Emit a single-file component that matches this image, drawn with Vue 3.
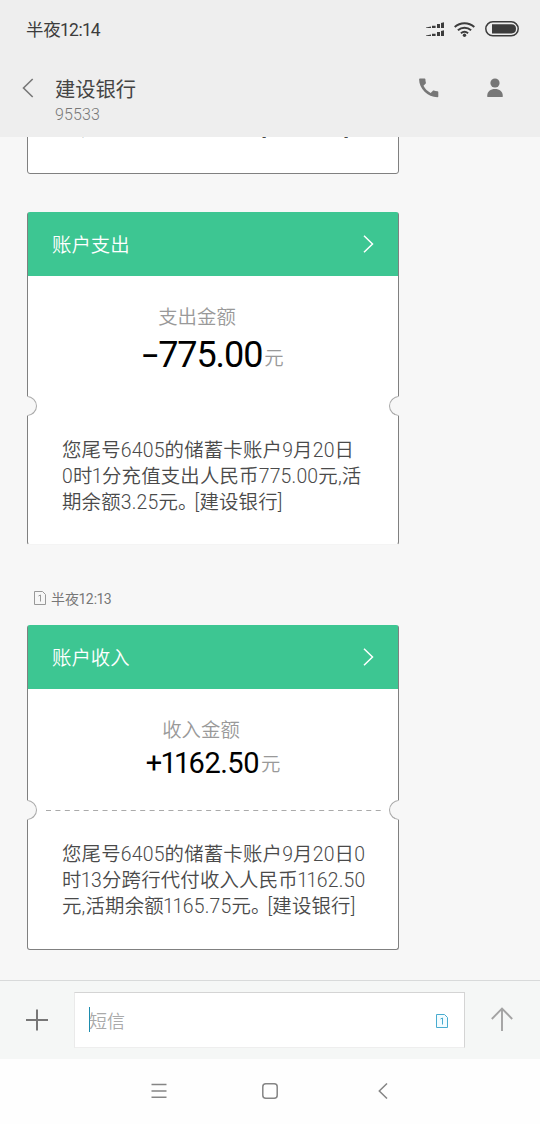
<template>
  <div class="screen">
    <div class="status">
      <span class="clock"><span v-for="(part, i) in split('半夜12:14')" :key="i" :class="partClass(part)">{{ part }}</span></span>
      <svg class="signal" width="19" height="15" viewBox="0 0 19 15" fill="#3c3c3c">
        <path d="M0 5.600 5 4.600V6H0zM6 3.800h3.600V6H6zM11 1.900h3v4.100h-3zM15 .900l3-.600V6h-3z" />
        <path d="M0 13.600 5 12.600V14H0zM6 11.800h3.600V14H6zM11 9.900h3v4.100h-3zM15 8.900l3-.600V14h-3z" />
      </svg>
      <svg class="wifi" width="21" height="15" viewBox="0 0 21 15" fill="none" stroke="#3c3c3c" stroke-width="2">
        <path d="M.7 5a14.500 14.500 0 0 1 19.600 0M3.900 8.200a10 10 0 0 1 13.200 0M6.900 11.300a5.600 5.600 0 0 1 7.200 0" />
        <circle cx="10.500" cy="13.200" r="1.700" fill="#3c3c3c" stroke="none" />
      </svg>
      <svg class="battery" width="34" height="16" viewBox="0 0 34 16">
        <rect x=".8" y=".8" width="32.400" height="14" rx="7" fill="none" stroke="#3c3c3c" stroke-width="1.500" />
        <path d="M7 3.200h19.500q4.500 0 4.500 4.600t-4.500 4.600H7z" fill="#3c3c3c" />
      </svg>
    </div>

    <header class="header">
      <svg class="back" width="12" height="20" viewBox="0 0 12 20" fill="none" stroke="#777" stroke-width="1.600">
        <path d="M10.700 1 1.500 10l9.200 9" />
      </svg>
      <div class="contact">
        <h1>建设银行</h1>
        <p>95533</p>
      </div>
      <svg class="phone" width="20" height="20" viewBox="0 0 20 20" fill="#777">
        <path d="M.9.5h4.700c.5 0 .8.3.8.8 0 1.200.2 2.300.5 3.400.1.3 0 .7-.2.9L4.500 7.800c1.600 3.100 4.100 5.600 7.200 7.200l2.200-2.200c.2-.2.6-.3.9-.2 1.100.3 2.200.5 3.700.6.5 0 .8.3.8.8v4.400c0 .5-.3.8-.8.8C8.700 19.200.1 10.700.1 1.300.1.800.4.500.9.500z" />
      </svg>
      <svg class="person" width="16" height="20" viewBox="0 0 16 20" fill="#777">
        <circle cx="8" cy="5" r="4.600" />
        <path d="M.3 19v-1.700C.3 13.600 3.500 11 8 11s7.700 2.600 7.700 6.300V19z" />
      </svg>
    </header>

    <main class="chat">
      <div class="card previous">
        <p><span v-for="(part, i) in split('元,活期余额778.25元。[建设银行]')" :key="i" :class="partClass(part)">{{ part }}</span></p>
      </div>

      <template v-for="msg in messages" :key="msg.title">
        <div v-if="msg.time" class="time">
          <svg width="12" height="14" viewBox="0 0 12 14" fill="none" stroke="#999">
            <path d="M.5.5h8l3 3v10H.5z" />
            <path d="M4.500 5 6.500 4v6.500" />
          </svg>
          <p><span v-for="(part, i) in split(msg.time)" :key="i" :class="partClass(part)">{{ part }}</span></p>
        </div>
        <section class="card" :class="msg.type">
          <div class="card-head">
            <span>{{ msg.title }}</span>
            <svg width="11" height="18" viewBox="0 0 11 18" fill="none" stroke="#fff" stroke-width="1.500">
              <path d="m1 .8 8.500 8.200L1 17.200" />
            </svg>
          </div>
          <div class="amount">
            <h2>{{ msg.label }}</h2>
            <p>
              <b><span v-for="(part, i) in split(msg.amount)" :key="i" :class="partClass(part)">{{ part }}</span></b>
              <span class="unit">元</span>
            </p>
          </div>
          <div class="tear">
            <i class="notch"></i>
            <svg v-if="msg.type === 'income'" width="335" height="1" viewBox="0 0 335 1">
              <path d="M0 .5h335" stroke="#aaa" stroke-dasharray="5 4.420" />
            </svg>
            <i class="notch right"></i>
          </div>
          <div class="detail">
            <p v-for="line in msg.lines" :key="line"><span v-for="(part, i) in split(line)" :key="i" :class="partClass(part)">{{ part }}</span></p>
          </div>
        </section>
      </template>
    </main>

    <footer class="composer">
      <svg class="plus" width="22" height="22" viewBox="0 0 22 22" stroke="#777" stroke-width="2">
        <path d="M0 11h22M11 .5v21" />
      </svg>
      <div class="field">
        <i class="caret"></i>
        <span>短信</span>
        <svg width="12" height="14" viewBox="0 0 12 14" fill="#f3fcff" stroke="#49acd0">
          <path d="M.5.5h8l3 3v10H.5z" />
          <path d="M4.500 5 6.500 4v6.500" fill="none" />
        </svg>
      </div>
      <svg class="send" width="22" height="24" viewBox="0 0 22 24" fill="none" stroke="#a3a3a3" stroke-width="1.900">
        <path d="M11 24V1.500M.8 12 11 1.500 21.200 12" />
      </svg>
    </footer>

    <nav class="nav">
      <svg width="16" height="16" viewBox="0 0 16 16" stroke="#858585" stroke-width="1.500">
        <path d="M.5 1.500h15M.5 8h15M.5 14.200h15" />
      </svg>
      <svg width="16" height="16" viewBox="0 0 16 16" fill="none" stroke="#858585" stroke-width="1.500">
        <rect x=".8" y=".8" width="14.400" height="14.400" rx="3" />
      </svg>
      <svg width="10" height="16" viewBox="0 0 10 16" fill="none" stroke="#858585" stroke-width="1.500">
        <path d="M9 .5 1.300 8 9 15.500" />
      </svg>
    </nav>
  </div>
</template>

<script setup>
import { ref } from 'vue';

const messages = ref([
  {
    type: 'expense',
    title: '账户支出',
    label: '支出金额',
    amount: '-775.00',
    lines: [
      '您尾号6405的储蓄卡账户9月20日',
      '0时1分充值支出人民币775.00元,活',
      '期余额3.25元。[建设银行]'
    ]
  },
  {
    type: 'income',
    time: '半夜12:13',
    title: '账户收入',
    label: '收入金额',
    amount: '+1162.50',
    lines: [
      '您尾号6405的储蓄卡账户9月20日0',
      '时13分跨行代付收入人民币1162.50',
      '元,活期余额1165.75元。[建设银行]'
    ]
  }
]);

// the digit 1, the full stop and the minus get their own spacing
const split = (text) => text.split(/(1|。|-)/).filter(Boolean);

const partClass = (part) => ({
  one: part === '1',
  stop: part === '。',
  minus: part === '-'
});
</script>

<style>
body {
  margin: 0;
  background: #fff;
}
</style>

<style scoped>
.screen {
  display: flex;
  flex-direction: column;
  width: 540px;
  height: 1124px;
  overflow: hidden;
  background: #f7f7f7;
  font-family: Roboto, "Noto Sans CJK SC", sans-serif;
}

h1,
h2,
p {
  margin: 0;
  font-weight: inherit;
  white-space: nowrap;
}

svg {
  display: block;
  flex: none;
}

.one {
  margin: 0 -0.04em;
}

.stop {
  letter-spacing: -0.15em;
}

.minus {
  display: inline-block;
  margin: 0 4px 0 3px;
  transform: scaleX(1.6);
}

.status {
  display: flex;
  align-items: center;
  flex: none;
  box-sizing: border-box;
  height: 60px;
  padding: 0 21px 2px 26px;
  background: #eee;
  color: #3c3c3c;
}

.clock {
  flex: 1;
  margin-top: -2px;
  font-size: 17.5px;
  letter-spacing: -0.2px;
}

.wifi {
  margin: 0 10px 0 9px;
}

.header {
  display: flex;
  flex: none;
  height: 77px;
  background: #eee;
}

.back {
  margin: 18px 0 0 22px;
}

.contact {
  flex: 1;
  margin: 16px 0 0 21px;
}

.contact h1 {
  color: #444;
  font-size: 20.3px;
  line-height: 28px;
}

.contact p {
  color: #777;
  font-size: 16px;
  font-weight: 300;
  letter-spacing: 0.1px;
  line-height: 22px;
}

.phone {
  margin: 18px 48px 0 0;
}

.person {
  margin: 18px 37px 0 0;
}

.chat {
  flex: 1;
  min-height: 0;
  overflow: hidden;
  padding-left: 27px;
}

.card {
  box-sizing: border-box;
  width: 372px;
  border: 1px solid #808080;
  border-radius: 3px;
  background: #fff;
}

.previous {
  height: 59px;
  margin: -22px 0 38px;
  padding: 0 0 0 34px;
  color: #4a4a4a;
  font-size: 19.4px;
  font-weight: 350;
  letter-spacing: 0.3px;
  line-height: 26px;
}

.expense {
  height: 333px;
  border-top-color: #3dc692;
  border-bottom-color: #f4f4f4;
}

.income {
  height: 325px;
  border-top-color: #3dc692;
}

.card-head {
  display: flex;
  align-items: center;
  justify-content: space-between;
  box-sizing: border-box;
  height: 63px;
  padding: 0 24px 2px 24px;
  background: #3dc692;
  color: #fff;
  font-size: 19.4px;
  font-weight: 350;
}

.amount {
  display: flex;
  flex-direction: column;
  align-items: center;
  box-sizing: border-box;
  height: 120px;
  padding-top: 28px;
}

.amount h2 {
  margin-right: 32px;
  color: #999;
  font-size: 19.4px;
  font-weight: 350;
  line-height: 28px;
}

.amount p {
  display: flex;
  align-items: baseline;
  height: 46px;
  line-height: 46px;
}

.amount b {
  color: #000;
  font-size: 36px;
  font-weight: 400;
  letter-spacing: -1.1px;
}

.amount .unit {
  margin-left: 2px;
  padding-bottom: 2px;
  color: #999;
  font-size: 19.4px;
  font-weight: 350;
  transform: translateY(-2px);
}

.income .amount {
  height: 111px;
}

.income .amount h2 {
  margin-right: 24px;
}

.income .amount b {
  font-size: 29px;
  letter-spacing: -0.5px;
}

.income .amount p {
  height: 36px;
  line-height: 36px;
}

.tear {
  display: flex;
  align-items: center;
  justify-content: space-between;
  height: 20px;
  margin: 0 -1px;
}

.notch {
  box-sizing: border-box;
  width: 10px;
  height: 20px;
  border: 1px solid #aaa;
  border-left-color: #f7f7f7;
  border-radius: 0 10px 10px 0;
  background: #f7f7f7;
}

.notch.right {
  transform: scaleX(-1);
}

.detail {
  padding: 22px 0 0 34px;
  color: #4a4a4a;
  font-size: 19.4px;
  font-weight: 350;
  letter-spacing: 0.2px;
  line-height: 26px;
}

.time {
  display: flex;
  align-items: center;
  gap: 5px;
  height: 80px;
  box-sizing: border-box;
  padding: 25px 0 0 7px;
  color: #777;
  font-size: 14px;
}

.composer {
  display: flex;
  align-items: center;
  flex: none;
  box-sizing: border-box;
  height: 79px;
  padding: 0 27px 0 26px;
  border-top: 1px solid #d8dada;
  background: #f5f7f6;
}

.field {
  display: flex;
  align-items: center;
  flex: 1;
  box-sizing: border-box;
  height: 56px;
  margin: 0 26px 1px;
  padding: 0 16px 0 14px;
  border: 1px solid #d4d4d4;
  border-left-color: #eaeaea;
  border-bottom-color: #eee;
  background: #fff;
}

.field svg {
  margin-top: 2px;
}

.caret {
  width: 1px;
  height: 25px;
  background: #1d8cae;
}

.field span {
  flex: 1;
  margin-left: -1px;
  color: #aaa;
  font-size: 18px;
  font-weight: 350;
}

.send {
  margin-bottom: 2px;
}

.nav {
  display: flex;
  align-items: center;
  flex: none;
  gap: 100px;
  box-sizing: border-box;
  height: 65px;
  padding: 0 0 1px 151px;
  background: #fefefe;
}

.nav svg:first-child {
  margin-right: -5px;
}
</style>
